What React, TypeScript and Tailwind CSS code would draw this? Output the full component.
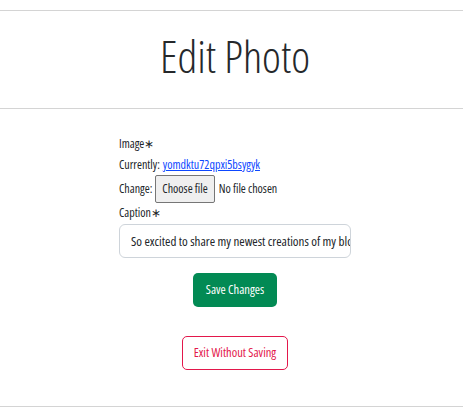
export default function App() {
  return (
    <div className="w-[463px] h-[415px] bg-white text-[#212529] font-['Open_Sans',sans-serif] font-stretch-condensed">
      <div className="pt-[10px]">
        <div className="border-t border-[#d4d4d4]" />
        <div className="h-[97px] flex items-center justify-center pl-[7px] pb-[8px]">
          <h1 className="text-[45px] leading-none font-light text-[#25282b]">Edit Photo</h1>
        </div>
        <div className="border-t border-[#d4d4d4]" />
      </div>

      <div className="pl-[119px]">
        <form className="w-[232px] pt-[24px] text-[12px] leading-none">
          <div className="h-[21px] flex items-center">Image∗</div>
          <div className="h-[21px] flex items-center gap-[3px]">
            <span>Currently:</span>
            <a href="#" className="text-[#0d47ff] underline">yomdktu72qpxi5bsygyk</a>
          </div>
          <div className="h-[28px] flex items-center">
            <span>Change:</span>
            <span className="ml-[3px] h-[28px] px-[6px] flex items-center border border-[#767676] bg-[#efefef] rounded-[2px]">Choose file</span>
            <span className="ml-[4px]">No file chosen</span>
          </div>
          <div className="h-[20px] flex items-center">Caption∗</div>
          <div className="mt-[1px] h-[34px] rounded-[6px] border border-[#ced4da] flex items-center pl-[11px] overflow-hidden whitespace-nowrap text-[13px]">
            So excited to share my newest creations of my blog
          </div>
          <div className="flex justify-center mt-[15px]">
            <button type="button" className="h-[34px] w-[84px] rounded-[5px] bg-[#028a54] text-white text-[12.5px]">Save Changes</button>
          </div>
          <div className="flex justify-center mt-[29px]">
            <button type="button" className="h-[34px] w-[106px] rounded-[5px] border border-[#e3174b] text-[#e3174b] bg-white text-[12.5px] whitespace-nowrap">Exit Without Saving</button>
          </div>
        </form>
      </div>
      <div className="mt-[36px] border-t border-[#d4d4d4]" />
    </div>
  );
}
